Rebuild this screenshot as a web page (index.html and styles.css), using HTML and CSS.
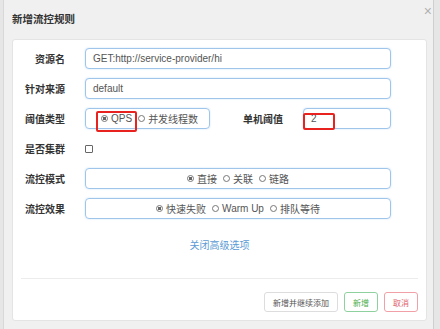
FILE: index.html
```html
<!DOCTYPE html>
<html lang="zh-CN">
<head>
    <meta charset="UTF-8">
    <title>新增流控规则</title>
    <link rel="stylesheet" href="styles.css">
</head>
<body>

    <div class="modal">
        <div class="modal-header">
            <span class="modal-title">新增流控规则</span>
            <span class="close">&times;</span>
        </div>

        <div class="panel">
            <div class="form-row">
                <label class="form-label">资源名</label>
                <input class="form-input" type="text" value="GET:http://service-provider/hi">
            </div>
            <div class="form-row">
                <label class="form-label">针对来源</label>
                <input class="form-input" type="text" value="default">
            </div>
            <div class="form-row">
                <label class="form-label">阈值类型</label>
                <div class="radio-box small">
                    <label class="radio-item"><input type="radio" name="grade" checked> QPS</label>
                    <label class="radio-item"><input type="radio" name="grade"> 并发线程数</label>
                    <span class="mark mark-qps"></span>
                </div>
                <label class="form-label wide">单机阈值</label>
                <div class="count-wrap">
                    <input class="form-input" type="text" value="2">
                    <span class="mark mark-count"></span>
                </div>
            </div>
            <div class="form-row">
                <label class="form-label">是否集群</label>
                <input class="check" type="checkbox">
            </div>
            <div class="form-row">
                <label class="form-label">流控模式</label>
                <div class="radio-box center">
                    <label class="radio-item"><input type="radio" name="mode" checked> 直接</label>
                    <label class="radio-item"><input type="radio" name="mode"> 关联</label>
                    <label class="radio-item"><input type="radio" name="mode"> 链路</label>
                </div>
            </div>
            <div class="form-row">
                <label class="form-label">流控效果</label>
                <div class="radio-box center">
                    <label class="radio-item"><input type="radio" name="effect" checked> 快速失败</label>
                    <label class="radio-item"><input type="radio" name="effect"> Warm Up</label>
                    <label class="radio-item"><input type="radio" name="effect"> 排队等待</label>
                </div>
            </div>

            <div class="advanced">
                <a href="#">关闭高级选项</a>
            </div>

            <div class="footer">
                <button class="btn">新增并继续添加</button>
                <button class="btn btn-add">新增</button>
                <button class="btn btn-cancel">取消</button>
            </div>
        </div>
    </div>

</body>
</html>
```

FILE: styles.css
```css
body {
    margin: 0;
    height: 329px;
    overflow: hidden;
    background: #e6e6e6;
    font-family: 'Liberation Sans', 'Noto Sans CJK SC', sans-serif;
    font-size: 10px;
    color: #333;
}

.modal {
    margin-left: 3px;
    width: 431px;
    height: 329px;
    background: #f0f0f0;
    border-left: 1px solid #d8d8d8;
    border-right: 1px solid #cfcfcf;
    box-sizing: border-box;
    padding: 0 6px 0 8px;
}

/* Header */
.modal-header {
    height: 39px;
    display: flex;
    justify-content: space-between;
    align-items: flex-start;
}
.modal-title {
    margin-top: 11px;
    font-size: 10.5px;
    font-weight: bold;
    color: #333;
}
.close {
    margin-top: 3px;
    margin-right: -5px;
    font-size: 14px;
    color: #b0b0b0;
}

/* Panel */
.panel {
    background: white;
    border: 1px solid #e4e4e4;
    border-radius: 3px;
    padding: 8px 8px 8px 8px;
}

.form-row {
    display: flex;
    align-items: center;
    height: 21px;
    margin-bottom: 9px;
    padding-right: 27px;
}
.form-label {
    flex-shrink: 0;
    width: 44px;
    margin-right: 20px;
    text-align: right;
    font-weight: bold;
    color: #333;
    white-space: nowrap;
}
.form-label.wide {
    width: 73px;
    margin-right: 20px;
}

.form-input {
    flex: 1;
    min-width: 0;
    height: 21px;
    box-sizing: border-box;
    border: 1px solid #9fc5ea;
    border-radius: 4px;
    padding: 0 7px;
    font-family: inherit;
    font-size: 10px;
    color: #555;
    outline: none;
    box-shadow: 0 0 2px rgba(102, 175, 233, 0.35);
}

.radio-box {
    position: relative;
    flex: 1;
    height: 21px;
    box-sizing: border-box;
    border: 1px solid #9fc5ea;
    border-radius: 4px;
    display: flex;
    align-items: center;
    gap: 5px;
    color: #555;
    box-shadow: 0 0 2px rgba(102, 175, 233, 0.35);
}
.radio-box.small {
    flex: 0 0 125px;
    padding-left: 15px;
    gap: 6px;
}
.radio-box.center {
    justify-content: center;
    gap: 6px;
}

.radio-item {
    display: inline-flex;
    align-items: center;
    gap: 3px;
    white-space: nowrap;
}
.radio-item input {
    appearance: none;
    margin: 0;
    width: 7px;
    height: 7px;
    border: 1px solid #777;
    border-radius: 50%;
    box-sizing: border-box;
}
.radio-item input:checked {
    background: radial-gradient(circle, #666 0 1.6px, white 2px);
}

.check {
    appearance: none;
    margin: 0;
    width: 8px;
    height: 8px;
    border: 1px solid #666;
    border-radius: 1px;
}

.count-wrap {
    position: relative;
    flex: 1;
    min-width: 0;
    display: flex;
}

/* red annotation boxes */
.mark {
    position: absolute;
    border: 2px solid #e8231f;
    border-radius: 2px;
    box-sizing: border-box;
}
.mark-qps {
    left: 10px;
    top: 2px;
    width: 41px;
    height: 21px;
}
.mark-count {
    left: 0;
    top: 5px;
    width: 32px;
    height: 17px;
}

.advanced {
    text-align: center;
    margin-top: 12px;
    line-height: 30px;
}
.advanced a {
    color: #5b9bd5;
    text-decoration: none;
}

.footer {
    margin-top: 17px;
    border-top: 1px solid #ececec;
    padding-top: 13px;
    display: flex;
    justify-content: flex-end;
    gap: 6px;
}
.btn {
    height: 20px;
    padding: 0 8px;
    background: white;
    border: 1px solid #ddd;
    border-radius: 3px;
    font-family: inherit;
    font-size: 8px;
    color: #555;
}
.btn-add {
    border-color: #8fd19e;
    color: #4cae4c;
}
.btn-cancel {
    border-color: #f0a0a6;
    color: #e0606a;
}
```
